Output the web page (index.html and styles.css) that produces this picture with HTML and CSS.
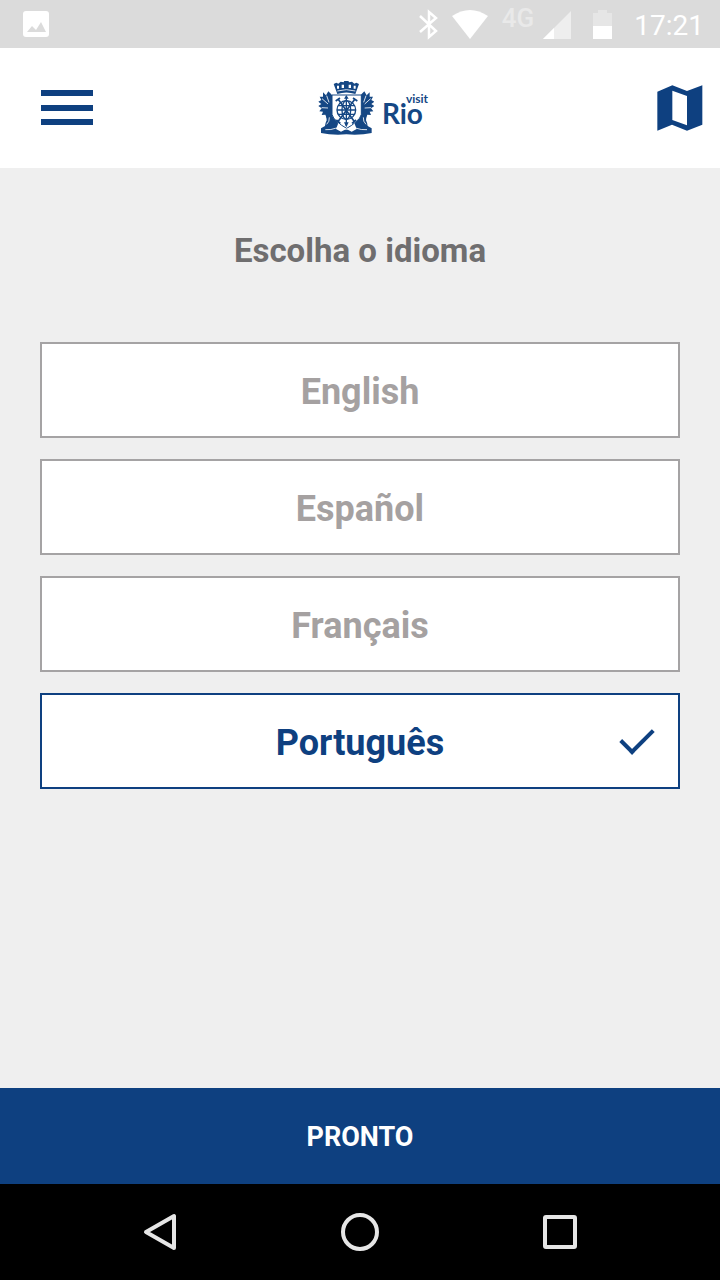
FILE: index.html
```html
<!DOCTYPE html>
<html lang="pt">
<head>
<meta charset="utf-8">
<meta name="viewport" content="width=device-width, initial-scale=1">
<title>Visit Rio</title>
<link rel="stylesheet" href="styles.css">
</head>
<body>
<div class="status">
  <svg class="status-photo" width="26" height="26" viewBox="0 0 26 26" aria-hidden="true"><rect width="26" height="26" rx="3" fill="#fff"/><path d="M4 21l5-6 4 4 5-8 5 10z" fill="#dbdbdb"/></svg>
  <svg width="84" height="32" viewBox="0 0 84 32" aria-hidden="true">
    <path d="M2 8l16 15-7 6V4l7 6L2 24" fill="none" stroke="#fff" stroke-width="2.500"/>
    <path d="M34 8Q52-4 70 8L52 31z" fill="#fff"/>
  </svg>
  <span class="status-net">4G</span>
  <svg class="status-signal" width="72" height="32" viewBox="0 0 72 32" aria-hidden="true">
    <path d="M1 31L29 3v28z" fill="#eee"/><path d="M1 31l11-11v11z" fill="#fff"/>
    <path d="M51 5h5V2h9v3h5v13H51z" fill="#e6e6e6"/><path d="M51 18h19v13H51z" fill="#fff"/>
  </svg>
  <span class="status-time">17:21</span>
</div>
<header class="header">
  <button class="icon-button" type="button" aria-label="Menu">
    <svg width="53" height="36" viewBox="0 0 53 36"><path d="M0 3h52M0 18h52M0 32h52" stroke="#0e4080" stroke-width="6"/></svg>
  </button>
  <a class="logo" href="#" aria-label="Visit Rio">
    <svg class="crest" width="56" height="55" viewBox="49 33 168 165" aria-hidden="true">
      <g fill="#154784">
        <path d="M96 42l8-4 6 3 7-6 9 2 2-5h12l2 5 9-2 7 6 6-3 8 4-11 30q-27-9-54 0z"/>
        <path d="M91 75L80 64l-7 12-9-9 0 13-10 0 5 10-9 5 9 7-9 6 10 7-7 9 11 1-4 10 11-1 4 10 13-6 9-20z"/>
        <path d="M177 75l11-11 7 12 9-9 0 13 10 0-5 10 9 5-9 7 9 6-10 7 7 9-11 1 4 10-11-1-4 10-13-6-9-20z"/>
        <path d="M77 106q11 2 15 14v17q16 9 17 25l-6 15 15 8 16-8 16 8 15-8-6-15q1-16 17-25v-17q4-12 15-14l5 18-3 27q4 8 5 17l12 7v14q-33 7-76 4-43 3-76-4v-14l12-7q1-9 5-17l-3-27z"/>
      </g>
      <path d="M91 75h88v58q-2 12-17 23-10 10-27 19-17-9-27-19-15-11-17-23z" fill="#fff" stroke="#154784" stroke-width="3"/>
      <g fill="none" stroke="#154784" stroke-width="4">
        <circle cx="134" cy="120" r="28"/>
        <ellipse cx="134" cy="120" rx="13" ry="28"/>
        <path d="M134 80v88M106 120h56M109 107h50M109 133h50" />
        <path d="M109 87l50 69M160 87l-52 69" stroke-width="5"/>
        <path d="M102 93l13-9M154 84l13 9M104 150l12 10M151 160l12-10" stroke-width="5"/>
      </g>
      <path d="M127 86l7-11 7 11zM127 157h14l-7 15z" fill="#154784"/>
      <g fill="#fff">
        <path d="M106 47h6v9h-6zM120 44h7v10h-7zM141 44h7v10h-7zM156 47h6v9h-6z"/>
      </g>
      <g fill="none" stroke="#fff" stroke-width="2.500">
        <path d="M107 63q27-8 54 0M61 86l18 16M75 77l7 20M60 113l19 1M207 86l-18 16M193 77l-7 20M208 113l-19 1"/>
        <path d="M75 163q9-8 8-21M193 163q-9-8-8-21M71 179q18 1 30-4 16-6 33 3 15-9 31-3 12 5 31 4"/>
      </g>
    </svg>
    <span class="wordmark"><span class="wordmark-top">visit</span><span class="wordmark-main">Rio</span></span>
  </a>
  <button class="icon-button icon-map" type="button" aria-label="Mapa">
    <svg width="48" height="46" viewBox="52 45 144 138"><path fill="#0e4080" fill-rule="evenodd" d="M53 65l45-19 44 17 46-17v118l-46 18-45-18-44 18zM98 62v88l44 16V78z"/></svg>
  </button>
</header>
<main class="main">
  <h1 class="title" id="language-title">Escolha o idioma</h1>
  <div class="options" role="radiogroup" aria-labelledby="language-title">
    <label class="option"><input class="option-input" type="radio" name="language" value="en"><span>English</span></label>
    <label class="option"><input class="option-input" type="radio" name="language" value="es"><span>Español</span></label>
    <label class="option"><input class="option-input" type="radio" name="language" value="fr"><span>Français</span></label>
    <label class="option"><input class="option-input" type="radio" name="language" value="pt" checked><span>Português</span></label>
  </div>
</main>
<button class="done" type="button">PRONTO</button>
<nav class="system-nav" aria-label="Sistema">
  <button class="icon-button" type="button" aria-label="Voltar"><svg width="40" height="40" viewBox="0 0 40 40"><path d="M6 20L34 4v32z"/></svg></button>
  <button class="icon-button" type="button" aria-label="Início"><svg width="40" height="40" viewBox="0 0 40 40"><circle cx="20" cy="20" r="17"/></svg></button>
  <button class="icon-button" type="button" aria-label="Recentes"><svg width="40" height="40" viewBox="0 0 40 40"><rect x="5" y="5" width="30" height="30" rx="1"/></svg></button>
</nav>
</body>
</html>
```
FILE: styles.css
```css
* {
  box-sizing: border-box;
}

body {
  display: flex;
  flex-direction: column;
  min-height: 100vh;
  margin: 0;
  background: #efefef;
  font-family: Roboto, "Liberation Sans", sans-serif;
}

button {
  padding: 0;
  border: 0;
  background: none;
  font-family: inherit;
  cursor: pointer;
}

svg {
  display: block;
  flex-shrink: 0;
}

.status {
  display: flex;
  align-items: center;
  height: 48px;
  padding: 0 16px 0 23px;
  background: #dbdbdb;
  color: #fff;
}

.status-photo {
  margin-right: auto;
}

.status-net {
  align-self: flex-start;
  padding-top: 4px;
  color: #e9e9e9;
  font-size: 26px;
  font-weight: 500;
  line-height: 28px;
}

.status-signal {
  margin: 0 20px 0 8px;
}

.status-time {
  padding-top: 2px;
  font-size: 28px;
  font-weight: 400;
}

.header {
  display: grid;
  grid-template-columns: 1fr auto 1fr;
  align-items: center;
  height: 120px;
  padding: 0 15px 0 41px;
  background: #fff;
}

.icon-button {
  justify-self: start;
}

.icon-map {
  justify-self: end;
}

.logo {
  display: flex;
  align-items: center;
  gap: 8px;
  color: #154784;
  text-decoration: none;
}

.wordmark {
  display: flex;
  flex-direction: column;
  font-family: Lato, sans-serif;
  font-weight: 700;
}

.wordmark-top {
  padding-left: 24px;
  font-size: 12px;
  line-height: 10px;
}

.wordmark-main {
  font-size: 28px;
  line-height: 18px;
}

.main {
  flex: 1;
  padding: 60px 40px;
}

.title {
  margin: 0 0 69px;
  color: #6f6e6f;
  font-size: 33px;
  font-weight: 700;
  line-height: 45px;
  text-align: center;
}

.options {
  display: grid;
  gap: 21px;
}

.option {
  position: relative;
  display: flex;
  align-items: center;
  justify-content: center;
  height: 96px;
  padding-top: 3px;
  border: 2px solid #a5a3a4;
  background: #fff;
  color: #a5a1a1;
  font-size: 36px;
  font-weight: 700;
  cursor: pointer;
}

.option:has(:checked) {
  border-color: #0e4080;
  color: #0e4080;
}

.option-input {
  position: absolute;
  top: 26px;
  right: 24px;
  width: 32px;
  height: 32px;
  margin: 0;
  appearance: none;
}

.option-input:checked::before {
  content: "";
  position: absolute;
  top: 0;
  left: 6px;
  width: 14px;
  height: 28px;
  border: solid #0e4080;
  border-width: 0 4px 4px 0;
  transform: rotate(45deg);
}

.done {
  height: 96px;
  padding-top: 2px;
  background: #0e4080;
  color: #fff;
  font-size: 27px;
  font-weight: 700;
}

.system-nav {
  display: flex;
  align-items: center;
  justify-content: space-between;
  height: 96px;
  padding: 0 140px;
  background: #000;
}

.system-nav svg {
  fill: none;
  stroke: #e6e6e6;
  stroke-width: 4;
  stroke-linejoin: round;
}
```
